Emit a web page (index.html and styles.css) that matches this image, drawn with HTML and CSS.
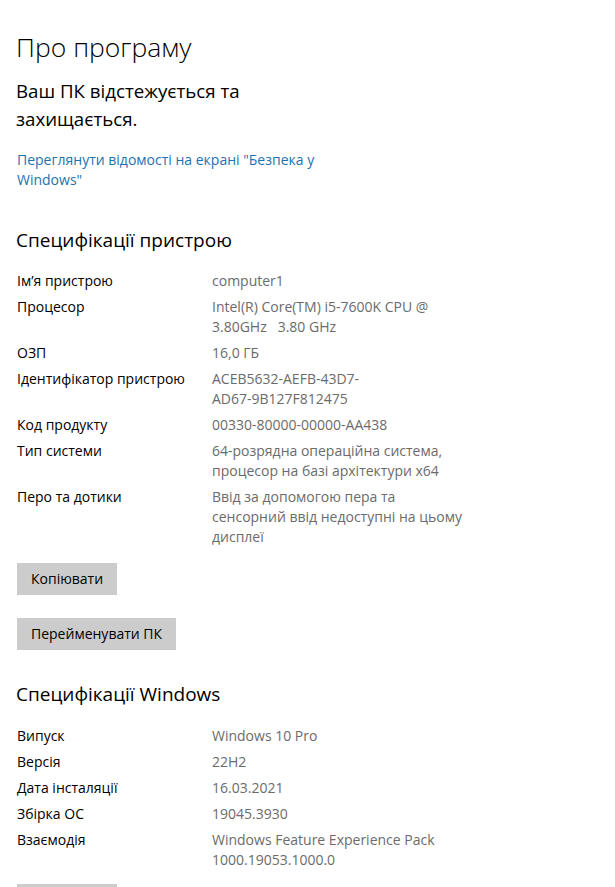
FILE: index.html
```html
<!DOCTYPE html>
<html lang="uk">
<head>
<meta charset="utf-8">
<link rel="stylesheet" href="styles.css">
</head>
<body>
<main class="page">
  <h1 class="title">Про програму</h1>
  <p class="status">Ваш ПК відстежується та<br>захищається.</p>
  <a class="link" href="#">Переглянути відомості на екрані "Безпека у<br>Windows"</a>

  <h2 class="section">Специфікації пристрою</h2>
  <dl class="specs">
    <div class="row"><dt>Ім’я пристрою</dt><dd>computer1</dd></div>
    <div class="row"><dt>Процесор</dt><dd>Intel(R) Core(TM) i5-7600K CPU @<br>3.80GHz&nbsp;&nbsp;&nbsp;3.80 GHz</dd></div>
    <div class="row"><dt>ОЗП</dt><dd>16,0 ГБ</dd></div>
    <div class="row"><dt>Ідентифікатор пристрою</dt><dd>ACEB5632-AEFB-43D7-<br>AD67-9B127F812475</dd></div>
    <div class="row"><dt>Код продукту</dt><dd>00330-80000-00000-AA438</dd></div>
    <div class="row"><dt>Тип системи</dt><dd>64-розрядна операційна система,<br>процесор на базі архітектури x64</dd></div>
    <div class="row"><dt>Перо та дотики</dt><dd>Ввід за допомогою пера та<br>сенсорний ввід недоступні на цьому<br>дисплеї</dd></div>
  </dl>
  <div class="buttons">
    <button class="btn">Копіювати</button>
    <button class="btn">Перейменувати ПК</button>
  </div>

  <h2 class="section section-win">Специфікації Windows</h2>
  <dl class="specs">
    <div class="row"><dt>Випуск</dt><dd>Windows 10 Pro</dd></div>
    <div class="row"><dt>Версія</dt><dd>22H2</dd></div>
    <div class="row"><dt>Дата інсталяції</dt><dd>16.03.2021</dd></div>
    <div class="row"><dt>Збірка ОС</dt><dd>19045.3930</dd></div>
    <div class="row"><dt>Взаємодія</dt><dd>Windows Feature Experience Pack<br>1000.19053.1000.0</dd></div>
  </dl>
  <div class="buttons buttons-last">
    <button class="btn">Копіювати</button>
  </div>
</main>
</body>
</html>
```

FILE: styles.css
```css
* { box-sizing: border-box; }
html, body {
  margin: 0;
  padding: 0;
  background: #ffffff;
  height: 887px;
  overflow: hidden;
}
body {
  font-family: "Open Sans", "Noto Sans", sans-serif;
  color: #000;
}
.page {
  padding: 27px 16px 0 16px;
  display: flex;
  flex-direction: column;
  align-items: flex-start;
}
.title {
  margin: 0;
  font-size: 26.5px;
  font-weight: 300;
  line-height: 40px;
}
.status {
  margin: 10px 0 0 0;
  font-size: 18.7px;
  font-weight: 400;
  line-height: 28px;
}
.link {
  margin: 17px 0 0 1px;
  font-size: 14px;
  line-height: 20px;
  color: #1d72b0;
  text-decoration: none;
}
.section {
  margin: 36px 0 0 0;
  font-size: 19px;
  font-weight: 400;
  line-height: 28px;
}
.section-win { margin-top: 30px; }
.specs {
  margin: 17px 0 0 1px;
  display: flex;
  flex-direction: column;
  gap: 6px;
}
.section-win + .specs { margin-top: 18px; }
.row {
  display: grid;
  grid-template-columns: 195px auto;
  font-size: 14px;
  line-height: 20px;
}
.row dt { color: #000; }
.row dd {
  margin: 0;
  color: #6b6b6b;
  white-space: nowrap;
}
.buttons {
  margin: 16px 0 0 1px;
  display: flex;
  flex-direction: column;
  align-items: flex-start;
  gap: 23px;
}
.buttons-last { margin-top: 14px; }
.btn {
  font-family: inherit;
  font-size: 14px;
  color: #000;
  background: #cccccc;
  border: none;
  height: 32px;
  padding: 0 14px;
  line-height: 32px;
}
```
